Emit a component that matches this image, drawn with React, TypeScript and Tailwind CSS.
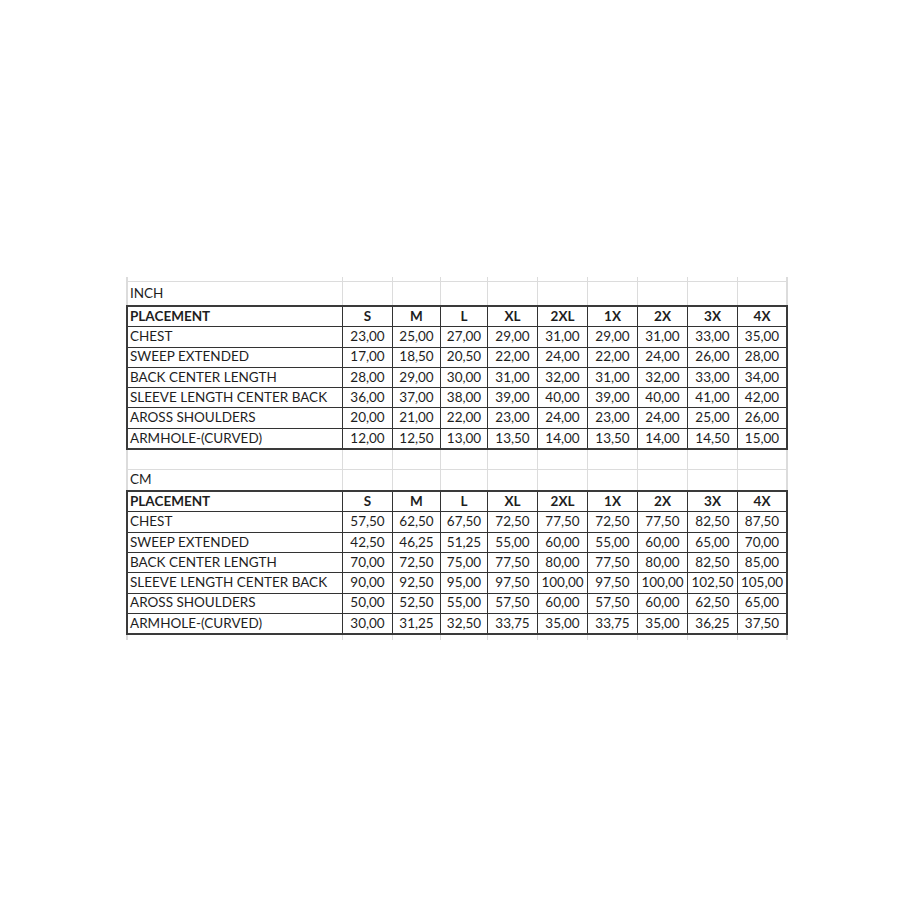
const sizes = ["S", "M", "L", "XL", "2XL", "1X", "2X", "3X", "4X"];

const inch: [string, string[]][] = [
  ["CHEST", ["23,00", "25,00", "27,00", "29,00", "31,00", "29,00", "31,00", "33,00", "35,00"]],
  ["SWEEP EXTENDED", ["17,00", "18,50", "20,50", "22,00", "24,00", "22,00", "24,00", "26,00", "28,00"]],
  ["BACK CENTER LENGTH", ["28,00", "29,00", "30,00", "31,00", "32,00", "31,00", "32,00", "33,00", "34,00"]],
  ["SLEEVE LENGTH CENTER BACK", ["36,00", "37,00", "38,00", "39,00", "40,00", "39,00", "40,00", "41,00", "42,00"]],
  ["AROSS SHOULDERS", ["20,00", "21,00", "22,00", "23,00", "24,00", "23,00", "24,00", "25,00", "26,00"]],
  ["ARMHOLE-(CURVED)", ["12,00", "12,50", "13,00", "13,50", "14,00", "13,50", "14,00", "14,50", "15,00"]],
];

const cm: [string, string[]][] = [
  ["CHEST", ["57,50", "62,50", "67,50", "72,50", "77,50", "72,50", "77,50", "82,50", "87,50"]],
  ["SWEEP EXTENDED", ["42,50", "46,25", "51,25", "55,00", "60,00", "55,00", "60,00", "65,00", "70,00"]],
  ["BACK CENTER LENGTH", ["70,00", "72,50", "75,00", "77,50", "80,00", "77,50", "80,00", "82,50", "85,00"]],
  ["SLEEVE LENGTH CENTER BACK", ["90,00", "92,50", "95,00", "97,50", "100,00", "97,50", "100,00", "102,50", "105,00"]],
  ["AROSS SHOULDERS", ["50,00", "52,50", "55,00", "57,50", "60,00", "57,50", "60,00", "62,50", "65,00"]],
  ["ARMHOLE-(CURVED)", ["30,00", "31,25", "32,50", "33,75", "35,00", "33,75", "35,00", "36,25", "37,50"]],
];

const cols = "grid-cols-[214px_49px_47px_46px_49px_49px_49px_49px_49px_48px]";

// light excel gridlines (empty cells around the table)
function GridRows({ labels, rows }: { labels: string[]; rows: string }) {
  return (
    <div className={`grid ${cols} ${rows} gap-px bg-[#dcdcdc] border-x-2 border-[#dcdcdc]`}>
      {labels.map((label, r) =>
        Array.from({ length: 10 }).map((_, c) => (
          <div key={`${r}-${c}`} className="bg-white flex items-center px-[2px] leading-none">
            {c === 0 ? label : ""}
          </div>
        ))
      )}
    </div>
  );
}

function SizeTable({ data }: { data: [string, string[]][] }) {
  return (
    <div className={`grid ${cols} auto-rows-[19.3px] gap-px bg-[#333] border-2 border-[#3a3a3a]`}>
      <div className="bg-white flex items-center px-[2px] font-bold leading-none">PLACEMENT</div>
      {sizes.map((s) => (
        <div key={s} className="bg-white flex items-center justify-center font-bold leading-none">
          {s}
        </div>
      ))}
      {data.map(([label, values]) => (
        <>
          <div key={label} className="bg-white flex items-center px-[2px] leading-none whitespace-nowrap">
            {label}
          </div>
          {values.map((v, i) => (
            <div key={label + i} className="bg-white flex items-center justify-center leading-none whitespace-nowrap">
              {v}
            </div>
          ))}
        </>
      ))}
    </div>
  );
}

export default function App() {
  return (
    <div className="min-h-[920px] w-[920px] bg-white pt-[277px] pl-[126px] text-[13.5px] text-[#1e1e1e] font-['Lato',sans-serif]">
      <div className="w-[662px]">
        <GridRows labels={[""]} rows="grid-rows-[4px]" />
        <div className="border-t border-[#dcdcdc]">
          <GridRows labels={["INCH"]} rows="grid-rows-[23px]" />
        </div>
        <SizeTable data={inch} />
        <GridRows labels={["", "CM"]} rows="grid-rows-[19px_20px]" />
        <SizeTable data={cm} />
        <GridRows labels={[""]} rows="grid-rows-[5px]" />
      </div>
    </div>
  );
}
